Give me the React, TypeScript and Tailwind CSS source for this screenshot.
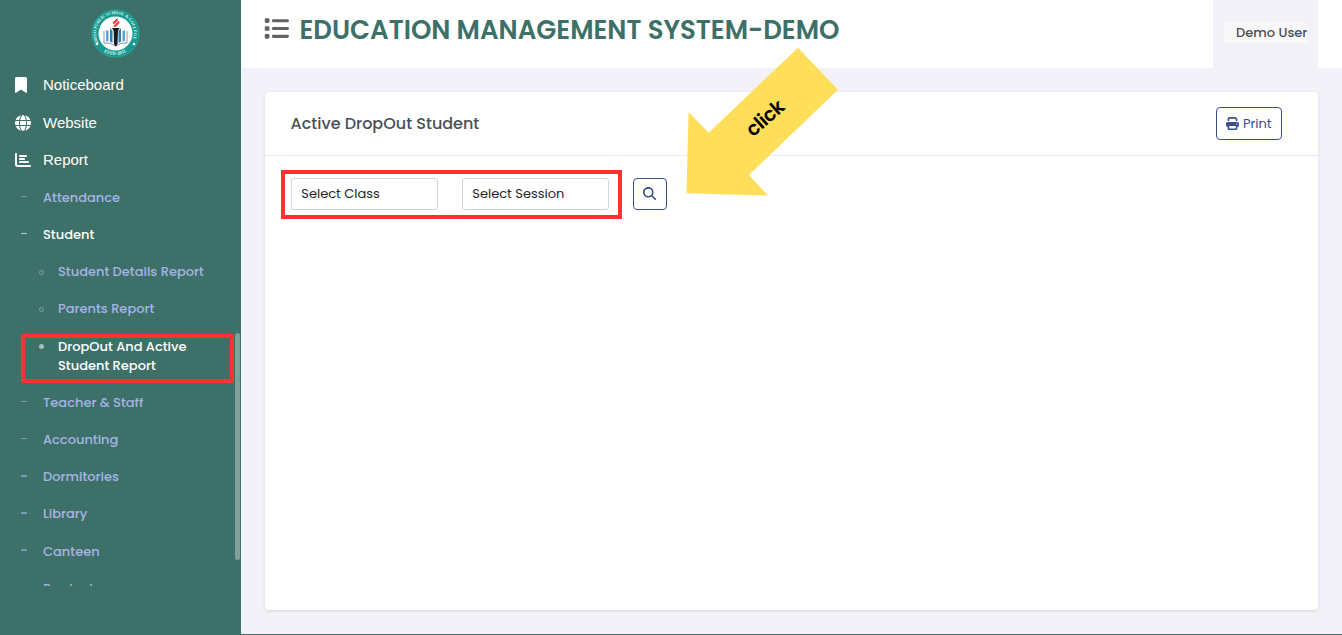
import type { ReactNode } from "react";
import { FaBookmark, FaGlobe, FaChartBar, FaList, FaPrint, FaMagnifyingGlass } from "react-icons/fa6";

function Logo() {
  return (
    <svg width="50" height="50" viewBox="0 0 50 50" className="mt-[8px] ml-[90px] shrink-0">
      <defs>
        <path id="upper" d="M8.5 34.5 A19 19 0 1 1 41.5 34.5" />
        <path id="lower" d="M11 42 A22.3 22.3 0 0 0 39 42" />
      </defs>
      <circle cx="25.5" cy="25.5" r="24" fill="#149a8f" />
      <circle cx="25.5" cy="25.5" r="23.6" fill="none" stroke="#3fb0a6" strokeWidth=".5" />
      <circle cx="25.5" cy="25.5" r="17" fill="#fff" />
      <text fontSize="4.2" fontWeight="700" fill="#e4f6f4" fontFamily="Liberation Serif, serif">
        <textPath href="#upper">IMISO PUBLIC SCHOOL &amp; COLLEGE</textPath>
      </text>
      <text fontSize="4.8" fontWeight="700" fill="#e4f6f4" fontFamily="Liberation Serif, serif" textAnchor="middle">
        <textPath href="#lower" startOffset="50%">ESTD-2011</textPath>
      </text>
      <circle cx="7" cy="36" r="1.3" fill="#fff" />
      <circle cx="44" cy="36" r="1.3" fill="#fff" />
      <path d="M14 23 V35 Q20 34 25.5 38 Q31 34 37 35 V23" fill="none" stroke="#8a99b5" strokeWidth="1" />
      <path d="M16 22 L18.5 23 V33.5 L16 33Z M35 22 L32.5 23 V33.5 L35 33Z" fill="#5ba4d2" />
      <path d="M20 20 L22.5 23 V35 L20 33.5Z M31 20 L28.5 23 V35 L31 33.5Z" fill="#2d7ead" />
      <path d="M22 20 H29.5 L28 23 L27.5 36 L25.7 38.5 L24 36 L23.7 23Z" fill="#171b20" />
      <path d="M22.5 14.5 L27.5 10 L28 12.5 L24 16.5Z M23 18.5 L29 12.5 L29.5 15 L25.5 19Z" fill="#ef3d45" />
    </svg>
  );
}

function MainItem({ icon, children, height }: { icon: ReactNode; children: ReactNode; height: string }) {
  return (
    <div className={`flex shrink-0 items-center pl-[15px] font-['Liberation_Sans',sans-serif] text-[15px] text-white ${height}`}>
      <span className="flex w-7 items-center">{icon}</span>
      <span>{children}</span>
    </div>
  );
}

function SubItem({ label, active = false, dash = "mb-[3px] h-px" }: { label: string; active?: boolean; dash?: string }) {
  return (
    <div className={`flex h-[37.2px] shrink-0 items-center pl-[21px] text-[13px] font-medium ${active ? "text-white" : "text-[#a6b4e4]"}`}>
      <span className={`mr-4 w-1.5 ${dash} ${active ? "bg-[#b9cbe0]" : "bg-[#7b9bb5]"}`} />
      <span>{label}</span>
    </div>
  );
}

function LeafItem({ label }: { label: string }) {
  return (
    <div className="flex h-[37.2px] shrink-0 items-center pl-[39px] text-[13px] font-medium text-[#a6b4e4]">
      <span className="mt-px mr-[14px] size-[5px] rounded-full border border-[#7f9fb5]" />
      <span>{label}</span>
    </div>
  );
}

function Sidebar() {
  return (
    <aside className="relative flex h-[635px] w-[241px] shrink-0 flex-col bg-[#3d7068]">
      <div className="flex h-[586px] flex-col overflow-hidden">
        <Logo />
        <div className="h-2 shrink-0" />
        <MainItem height="h-[38px]" icon={<FaBookmark className="h-4 w-3" />}>Noticeboard</MainItem>
        <MainItem height="h-[38px]" icon={<FaGlobe className="size-4" />}>Website</MainItem>
        <MainItem height="h-[37px]" icon={<FaChartBar className="mb-px size-4" />}>Report</MainItem>
        <SubItem label="Attendance" />
        <SubItem label="Student" active />
        <LeafItem label="Student Details Report" />
        <LeafItem label="Parents Report" />
        <div className="flex h-[56.22px] shrink-0 pl-[39px] pt-[9px] text-[13px] leading-[19px] font-medium text-white">
          <span className="mt-[7px] mr-[14px] size-[5px] rounded-full bg-[#a8c0bb]" />
          <span>
            <span className="block">DropOut And Active</span>
            <span className="block">Student Report</span>
          </span>
        </div>
        <SubItem label="Teacher & Staff" />
        <SubItem label="Accounting" />
        <SubItem label="Dormitories" dash="mb-[2px] h-[2px]" />
        <SubItem label="Library" dash="mb-[2px] h-[2px]" />
        <SubItem label="Canteen" dash="mb-[2px] h-[2px]" />
        <SubItem label="Products" />
      </div>
      <div className="absolute left-[21px] top-[334px] h-[49px] w-[213px] border-4 border-[#ff3131]" />
      <div className="absolute left-[235px] top-[333px] h-[227px] w-[5px] rounded-full bg-[#809f99]" />
    </aside>
  );
}

function Arrow() {
  return (
    <svg width="160" height="155" viewBox="680 45 160 155" className="absolute left-[680px] top-[45px]">
      <path d="M798 47.7 L838 89.7 L749 175 L768 195.5 L686.5 193.3 L688.6 112 L708.7 132.7Z" fill="#ffde59" />
      <text x="0" y="0" transform="translate(753 137.5) rotate(-41)" fontSize="19.5" fontWeight="600" textLength="44" fill="#000">click</text>
    </svg>
  );
}

export default function App() {
  return (
    <div className="relative flex h-[635px] w-[1342px] overflow-hidden bg-[#f3f2f8] font-[Poppins,Inter,sans-serif]">
      <Sidebar />
      <div className="flex min-w-0 flex-1 flex-col border-b border-[#3d7068]">
        <header className="flex h-[68px] shrink-0 bg-white pl-[22.5px]">
          <FaList className="mt-4 size-[25px] text-[#636363]" />
          <h1 className="ml-[11px] mt-[11px] text-[26px] leading-[39px] font-semibold whitespace-nowrap text-[#3d7068]">
            EDUCATION MANAGEMENT SYSTEM-DEMO
          </h1>
          <div className="mr-6 ml-auto w-[105px] bg-[#f3f2f8] pt-[23px] pl-[11px]">
            <div className="h-5 w-[83px] bg-[#f8f8f9] pl-3 text-[13px] leading-5 font-medium whitespace-nowrap text-[#495057]">Demo User</div>
          </div>
        </header>
        <main className="mt-6 ml-6 h-[518px] w-[1053px] rounded bg-white shadow-[0_1px_3px_rgba(50,50,93,0.15)]">
          <div className="flex h-[64px] items-center justify-between border-b border-[#e9e9ef] pr-9 pl-[25.5px]">
            <h2 className="text-[16px] font-medium text-[#495057]">Active DropOut Student</h2>
            <button className="flex h-[33px] w-[66px] items-center justify-center gap-[3.5px] rounded border border-[#3b4f8f] text-[13px] text-[#3b4f8f]">
              <FaPrint className="size-[13px]" />
              <span>Print</span>
            </button>
          </div>
          <div className="flex pt-[14px] pl-4">
            <div className="flex h-[49px] w-[341px] gap-6 border-4 border-[#ff3131] pt-1 pl-[6px]">
              <div className="h-8 w-[147px] rounded-[3px] border border-[#ced4da] pl-[9.25px] text-[13px] leading-[30px] text-[#212529]">Select Class</div>
              <div className="h-8 w-[147px] rounded-[3px] border border-[#ced4da] pl-[9.25px] text-[13px] leading-[30px] text-[#212529]">Select Session</div>
            </div>
            <button className="mt-2 ml-[11px] flex h-8 w-[34px] items-center justify-center rounded border border-[#3b4f8f] pr-px pb-[2px] text-[#3b4f8f]">
              <FaMagnifyingGlass className="size-[13px]" />
            </button>
          </div>
        </main>
      </div>
      <Arrow />
    </div>
  );
}
